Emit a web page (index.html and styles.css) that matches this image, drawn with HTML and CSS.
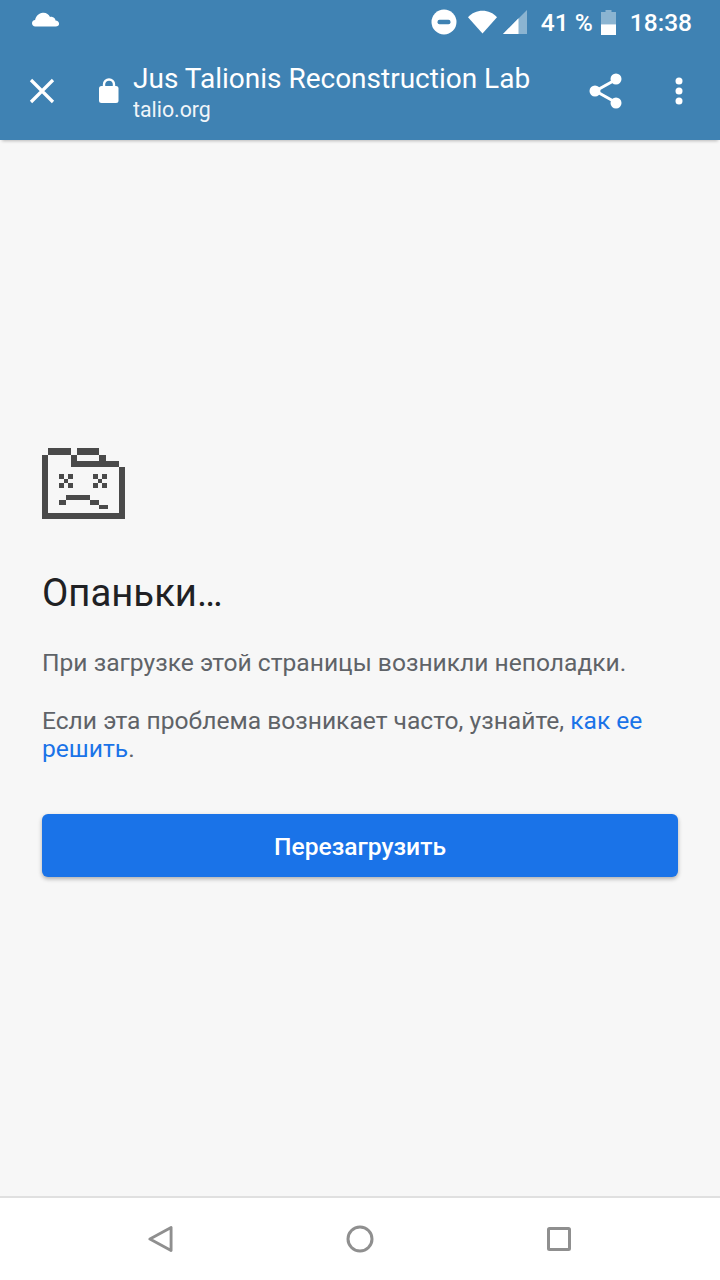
FILE: index.html
```html
<!DOCTYPE html>
<html lang="ru">
<head>
  <meta charset="UTF-8" />
  <meta name="viewport" content="width=device-width, initial-scale=1.0" />
  <title>Опаньки…</title>
  <link rel="stylesheet" href="styles.css">
</head>
<body>
  <div class="statusbar">
    <svg class="cloud" width="28" height="15" viewBox="0 0 30 16" preserveAspectRatio="none"><path d="M3.500 15.500C1.500 15.500 0 14 0 12c0-1.900 1.400-3.400 3.300-3.600C4.300 4.500 7.300 1.500 11.500.9 15 .5 18 2.500 19.300 5.400c.7-.3 1.700-.4 2.500-.2 2 .4 3.200 2 3.400 3.800 2.200.1 3.800 1.700 3.800 3.500 0 1.800-1.500 3-3.500 3z" fill="#fff"/></svg>
    <div class="status-right">
      <svg width="26" height="26" viewBox="0 0 26 26"><circle cx="13" cy="13" r="12.500" fill="#fff"/><rect x="6.500" y="10.800" width="13" height="4.400" rx="2" fill="#3f82b3"/></svg>
      <svg class="wifi" width="29" height="24" viewBox="0 0 31 25" preserveAspectRatio="none"><path d="M15.500 24.500L0 7.500C4 3.200 9.500.8 15.500.8S27 3.200 31 7.500z" fill="#fff"/></svg>
      <svg class="signal" width="24" height="24" viewBox="0 0 24 25" preserveAspectRatio="none"><path d="M24 0v25H0z" fill="#fff" fill-opacity=".4"/><path d="M15.500 8.500V25H0z" fill="#fff"/></svg>
      <span class="pct">41 %</span>
      <svg class="battery" width="15" height="25" viewBox="0 0 15 26" preserveAspectRatio="none"><path d="M4.500 0h6v2H15v24H0V2h4.500z" fill="#fff" fill-opacity=".4"/><rect y="15" width="15" height="11" fill="#fff"/></svg>
      <span class="clock">18:38</span>
    </div>
  </div>

  <div class="toolbar">
    <svg class="close" width="26" height="26" viewBox="0 0 26 26"><path d="M2 2l22 22M24 2L2 24" stroke="#fff" stroke-width="3.200" fill="none"/></svg>
    <svg class="lock" width="20" height="25" viewBox="0 0 20 25"><path d="M5 9V6.500a5 5 0 0 1 10 0V9" stroke="#fff" stroke-width="2.400" fill="none"/><rect y="8" width="19.500" height="17" rx="2.500" fill="#fff"/></svg>
    <div class="title-block">
      <div class="site-title">Jus Talionis Reconstruction Lab</div>
      <div class="site-url">talio.org</div>
    </div>
    <svg class="share" width="34" height="36" viewBox="0 0 34 36"><path d="M27 6.500L6.500 18 27 29.500" stroke="#fff" stroke-width="3" fill="none"/><circle cx="27" cy="6" r="5.500" fill="#fff"/><circle cx="6" cy="18" r="5.500" fill="#fff"/><circle cx="27" cy="30" r="5.500" fill="#fff"/></svg>
    <svg class="more" width="8" height="28" viewBox="0 0 8 28"><circle cx="4" cy="4" r="3.500" fill="#fff"/><circle cx="4" cy="14" r="3.500" fill="#fff"/><circle cx="4" cy="24" r="3.500" fill="#fff"/></svg>
  </div>

  <div class="main">
    <svg class="sad-tab" width="83" height="71" viewBox="0 0 83 71" fill="#4a4a4a" shape-rendering="crispEdges">
      <rect x="6" y="0" width="23" height="7"/>
      <rect x="35" y="0" width="22" height="7"/>
      <rect x="29" y="7" width="6" height="12"/>
      <rect x="29" y="13" width="48" height="6"/>
      <rect x="57" y="7" width="7" height="6"/>
      <rect x="0" y="7" width="6" height="64"/>
      <rect x="77" y="19" width="6" height="52"/>
      <rect x="0" y="65" width="83" height="6"/>
      <path d="M17 26h5v5h-5zM26 26h5v5h-5zM22 31h4v4h-4zM17 35h5v5h-5zM26 35h5v5h-5z"/>
      <path d="M51 26h5v5h-5zM60 26h5v5h-5zM56 31h4v4h-4zM51 35h5v5h-5zM60 35h5v5h-5z"/>
      <rect x="24" y="47" width="24" height="5"/>
      <rect x="17" y="52" width="7" height="5"/>
      <rect x="48" y="52" width="9" height="5"/>
      <rect x="57" y="57" width="9" height="4"/>
    </svg>
    <h1>Опаньки…</h1>
    <p class="first">При загрузке этой страницы возникли неполадки.</p>
    <p>Если эта проблема возникает часто, узнайте, <a href="#">как ее решить</a>.</p>
    <button class="reload">Перезагрузить</button>
  </div>

  <div class="navbar">
    <svg width="25" height="28" viewBox="0 0 26 28"><path d="M24 2v24L2 14z" stroke="#8f8f8f" stroke-width="3" stroke-linejoin="round" fill="none"/></svg>
    <svg width="28" height="28" viewBox="0 0 28 28"><circle cx="14" cy="14" r="12" stroke="#8f8f8f" stroke-width="3" fill="none"/></svg>
    <svg width="24" height="24" viewBox="0 0 24 24"><rect x="1.500" y="1.500" width="21" height="21" rx="1" stroke="#8f8f8f" stroke-width="3" fill="none"/></svg>
  </div>
</body>
</html>
```

FILE: styles.css
```css
* {
  margin: 0;
  padding: 0;
  box-sizing: border-box;
  font-family: Roboto, sans-serif;
}

body {
  width: 720px;
  height: 1280px;
  display: flex;
  flex-direction: column;
  background: #f7f7f7;
  overflow: hidden;
}

svg {
  display: block;
  flex-shrink: 0;
}

.statusbar {
  height: 44px;
  background: #3f82b3;
  color: #fff;
  display: flex;
  justify-content: space-between;
  align-items: center;
  padding: 0 28px 0 32px;
}

.cloud {
  margin-top: -5px;
}

.status-right {
  display: flex;
  align-items: center;
  font-size: 24.500px;
  font-weight: 500;
}

.wifi {
  margin-left: 11px;
}

.signal {
  margin-left: 6px;
}

.pct {
  margin-left: 14px;
}

.battery {
  margin-left: 8px;
}

.clock {
  margin-left: 14px;
}

.toolbar {
  height: 96px;
  background: #3f82b3;
  color: #fff;
  display: flex;
  align-items: center;
  padding: 0 37px 0 29px;
  box-shadow: 0 3px 3px -2px rgba(0, 0, 0, 0.25);
}

.close {
  margin-bottom: 2px;
}

.lock {
  margin-left: 44px;
  margin-bottom: 3px;
}

.title-block {
  margin-left: 14px;
  margin-top: 2px;
  flex: 1;
}

.site-title {
  font-size: 28px;
  line-height: 34px;
}

.site-url {
  font-size: 21.300px;
  line-height: 28px;
  opacity: 0.92;
}

.share {
  margin-right: 52px;
  margin-bottom: 3px;
}

.more {
  margin-bottom: 2px;
}

.main {
  flex: 1;
  padding: 308px 42px 0;
}

.sad-tab {
  margin-bottom: 49px;
}

h1 {
  font-size: 38.300px;
  font-weight: 400;
  line-height: 50px;
  color: #202124;
  margin-bottom: 31px;
}

p {
  font-size: 24.600px;
  line-height: 28px;
  color: #5f6368;
}

p.first {
  margin-bottom: 30px;
}

a {
  color: #1a73e8;
  text-decoration: none;
}

.reload {
  display: block;
  width: 100%;
  height: 63px;
  margin-top: 51px;
  padding-top: 1px;
  background: #1a73e8;
  color: #fff;
  border: none;
  border-radius: 6px;
  font-size: 24.600px;
  font-weight: 500;
  box-shadow: 0 2px 4px rgba(0, 0, 0, 0.3);
}

.navbar {
  height: 84px;
  background: #fff;
  border-top: 2px solid #e0e0e0;
  display: flex;
  justify-content: space-between;
  align-items: center;
  padding: 0 149px 1px 148px;
}
```
